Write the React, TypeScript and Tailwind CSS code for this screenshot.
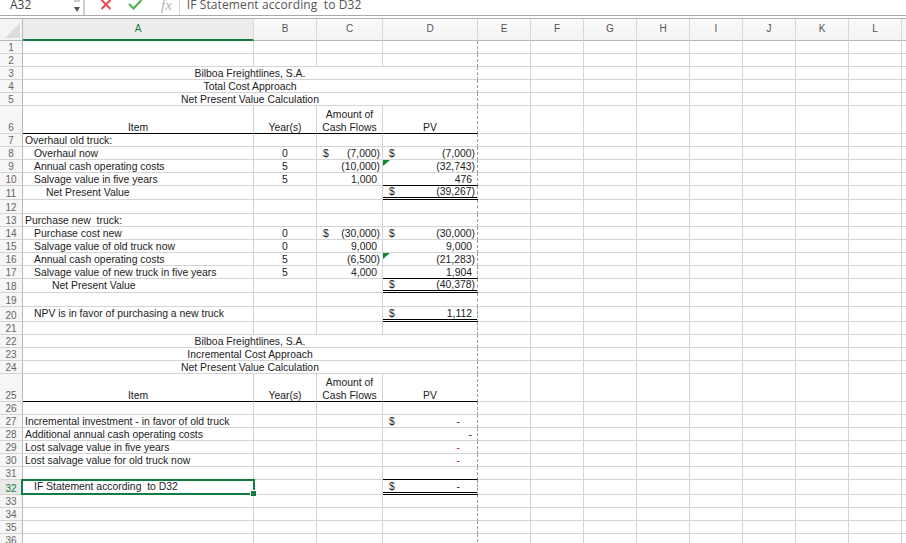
import type { ReactNode } from 'react';

type Row = {
  n: number;
  h: string;
  title?: string;
  item?: string;
  indent?: string;
  year?: string;
  cSign?: boolean;
  c?: string;
  cPad?: boolean;
  dSign?: boolean;
  d?: string;
  dPad?: boolean;
  dClass?: string;
  dBorder?: string;
  flag?: boolean;
  head?: boolean;
};

const L1 = 'pl-[2px]';
const L2 = 'pl-[11px]';
const single = 'border-b border-b-black';
const double = 'border-b-[3px] border-b-black [border-bottom-style:double]!';

const rows: Row[] = [
  { n: 1, h: 'h-[13px]' },
  { n: 2, h: 'h-[13px]' },
  { n: 3, h: 'h-[13px]', title: 'Bilboa Freightlines, S.A.' },
  { n: 4, h: 'h-[13px]', title: 'Total Cost Approach' },
  { n: 5, h: 'h-[13px]', title: 'Net Present Value Calculation' },
  { n: 6, h: 'h-[28px]', head: true },
  { n: 7, h: 'h-[13px]', item: 'Overhaul old truck:', indent: L1 },
  { n: 8, h: 'h-[13px]', item: 'Overhaul now', indent: L2, year: '0', cSign: true, c: '(7,000)', dSign: true, d: '(7,000)' },
  { n: 9, h: 'h-[13px]', item: 'Annual cash operating costs', indent: L2, year: '5', c: '(10,000)', d: '(32,743)', flag: true },
  { n: 10, h: 'h-[13px]', item: 'Salvage value in five years', indent: L2, year: '5', c: '1,000', cPad: true, d: '476', dPad: true, dBorder: single },
  { n: 11, h: 'h-[14px]', item: 'Net Present Value', indent: 'pl-[23px] pb-px', dSign: true, d: '(39,267)', dBorder: double },
  { n: 12, h: 'h-[14px]' },
  { n: 13, h: 'h-[13px]', item: 'Purchase new  truck:', indent: L1 },
  { n: 14, h: 'h-[13px]', item: 'Purchase cost new', indent: L2, year: '0', cSign: true, c: '(30,000)', dSign: true, d: '(30,000)' },
  { n: 15, h: 'h-[13px]', item: 'Salvage value of old truck now', indent: L2, year: '0', c: '9,000', cPad: true, d: '9,000', dPad: true },
  { n: 16, h: 'h-[13px]', item: 'Annual cash operating costs', indent: L2, year: '5', c: '(6,500)', d: '(21,283)', flag: true },
  { n: 17, h: 'h-[13px]', item: 'Salvage value of new truck in five years', indent: L2, year: '5', c: '4,000', cPad: true, d: '1,904', dPad: true, dBorder: single },
  { n: 18, h: 'h-[14px]', item: 'Net Present Value', indent: 'pl-[29px] pb-px', dSign: true, d: '(40,378)', dBorder: double },
  { n: 19, h: 'h-[14px]' },
  { n: 20, h: 'h-[15px]', item: 'NPV is in favor of purchasing a new truck', indent: 'pl-[11px] pb-[2px]', dSign: true, d: '1,112', dPad: true, dBorder: double },
  { n: 21, h: 'h-[13px]' },
  { n: 22, h: 'h-[13px]', title: 'Bilboa Freightlines, S.A.' },
  { n: 23, h: 'h-[13px]', title: 'Incremental Cost Approach' },
  { n: 24, h: 'h-[13px]', title: 'Net Present Value Calculation' },
  { n: 25, h: 'h-[28px]', head: true },
  { n: 26, h: 'h-[13px]' },
  { n: 27, h: 'h-[13px]', item: 'Incremental investment - in favor of old truck', indent: L1, dSign: true, d: '-', dClass: 'pr-[17px]' },
  { n: 28, h: 'h-[13px]', item: 'Additional annual cash operating costs', indent: L1, d: '-', dClass: 'pr-[5px]' },
  { n: 29, h: 'h-[13px]', item: 'Lost salvage value in five years', indent: L1, d: '-', dClass: 'pr-[17px] text-red-600' },
  { n: 30, h: 'h-[13px]', item: 'Lost salvage value for old truck now', indent: L1, d: '-', dClass: 'pr-[17px] text-red-600' },
  { n: 31, h: 'h-[13px]', dBorder: single },
  { n: 32, h: 'h-[15px]', item: 'IF Statement according  to D32', indent: 'pl-[11px] pb-[2px]', dSign: true, d: '-', dClass: 'pr-[17px]', dBorder: double },
  { n: 33, h: 'h-[13px]' },
  { n: 34, h: 'h-[13px]' },
  { n: 35, h: 'h-[13px]' },
  { n: 36, h: 'h-[13px]' },
];

const grid = 'border-r border-b border-[#d4d4d4]';
const dashed = 'border-r border-r-[#9a9a9a] [border-right-style:dashed]!';
const colA = 'w-[231px]';
const colB = 'w-[63px]';
const colC = 'w-[66px]';
const colD = 'w-[95px]';
const rest = ['E', 'F', 'G', 'H', 'I', 'J', 'K', 'L'];

function HeadCell({ w, active, children }: { w: string; active?: boolean; children?: ReactNode }) {
  return (
    <div
      className={`${w} flex shrink-0 items-center justify-center border-r border-[#d8d8d8] pb-px text-[10px] ${
        active ? 'border-b-2 border-b-[#107c41] bg-[#ececec] text-[#107c41]' : 'border-b border-b-[#b8b8b8] bg-gradient-to-b from-[#fbfbfb] to-[#f3f3f3] text-[#555]'
      }`}
    >
      {children}
    </div>
  );
}

function Money({ sign, value, pad, cls }: { sign?: boolean; value?: string; pad?: boolean; cls?: string }) {
  return (
    <>
      {sign && <span>$</span>}
      <span className={`ml-auto ${pad ? 'pr-[5px]' : 'pr-[2px]'} ${cls ?? ''}`}>{value}</span>
    </>
  );
}

function SheetRow({ r }: { r: Row }) {
  const sel = r.n === 32;
  const headLine = r.head ? 'border-b-black' : '';
  return (
    <div className={`${r.h} flex`}>
      <div
        className={`flex w-[23px] shrink-0 items-end justify-center border-r border-b border-r-[#b8b8b8] border-b-[#d4d4d4] text-[10px] ${
          sel ? 'bg-[#e9e9e9] text-[#107c41]' : 'bg-[#f6f6f6] text-[#666]'
        }`}
      >
        {r.n}
      </div>
      {r.title ? (
        <div className={`flex w-[455px] shrink-0 items-end justify-center border-b border-b-[#d4d4d4] ${dashed}`}>{r.title}</div>
      ) : (
        <>
          <div className={`${colA} relative flex shrink-0 items-end whitespace-pre ${r.head ? 'justify-center' : 'justify-start'} ${r.indent ?? ''} ${grid} ${headLine}`}>
            {r.head ? 'Item' : r.item}
            {sel && (
              <div className="absolute top-[-1px] left-[-2px] z-10 h-[16px] w-[234px] border-2 border-[#107c41]">
                <div className="absolute right-[-3px] bottom-[-3px] h-[5px] w-[5px] bg-[#107c41] ring-1 ring-white" />
              </div>
            )}
          </div>
          <div className={`${colB} flex shrink-0 items-end justify-center ${grid} ${headLine}`}>{r.head ? 'Year(s)' : r.year}</div>
          <div className={`${colC} flex shrink-0 items-end ${r.head ? 'justify-center text-center' : 'pl-[6px]'} ${grid} ${headLine}`}>
            {r.head ? <span className="mb-[-1px] leading-[13px]">Amount of<br />Cash Flows</span> : <Money sign={r.cSign} value={r.c} pad={r.cPad} />}
          </div>
          <div className={`${colD} relative flex shrink-0 items-end ${r.head ? 'justify-center border-b border-b-black' : `pl-[6px] border-b border-b-[#d4d4d4] ${r.dBorder ?? ''}`} ${dashed}`}>
            {r.head ? 'PV' : <Money sign={r.dSign} value={r.d} pad={r.dPad} cls={r.dClass} />}
            {r.flag && (
              <svg className="absolute top-0 left-0" width="7" height="7" viewBox="0 0 7 7">
                <path d="M0 0H7L0 6Z" fill="#0f8a2c" />
              </svg>
            )}
          </div>
        </>
      )}
      {rest.map((c) => (
        <div key={c} className={`w-[53px] shrink-0 ${grid}`} />
      ))}
      <div className="flex-1 border-b border-[#d4d4d4]" />
    </div>
  );
}

export default function App() {
  return (
    <div className="h-[543px] w-[906px] overflow-hidden bg-white font-['Liberation_Sans',Arial,sans-serif] text-[10.4px] leading-[10px] text-[#222]">
      <div className="flex h-[16px] items-start overflow-hidden border-b border-[#a9a9a9] font-['Open_Sans',sans-serif] text-[12px] text-[#444]">
        <div className="relative flex h-full w-[85px] shrink-0 items-start border-r-2 border-[#d0d0d0] pl-[10px]">
          <span className="mt-[-3px] leading-[16px]">A32</span>
          <svg className="absolute top-0 left-[73px]" width="8" height="13" viewBox="0 0 8 13">
            <path d="M1 1H7" stroke="#999" />
            <path d="M1 7H7L4 12Z" fill="#555" />
          </svg>
        </div>
        <svg className="mt-0 ml-[15px] shrink-0" width="12" height="10" viewBox="0 0 12 10">
          <path d="M1.5 0L10.5 9M10.5 0L1.5 9" stroke="#e5484d" strokeWidth="2" fill="none" />
        </svg>
        <svg className="ml-[16px] shrink-0" width="15" height="10" viewBox="0 0 15 10">
          <path d="M1 4L5.5 8.5L13.5 0" stroke="#4caf50" strokeWidth="2" fill="none" />
        </svg>
        <span className="mt-[-3px] ml-[18px] font-['Liberation_Serif',serif] text-[15px] leading-[16px] text-[#b5b5b5] italic">fx</span>
        <div className="ml-[7px] h-full w-px bg-[#d8d8d8]" />
        <span className="mt-[-3px] ml-[7px] whitespace-pre leading-[16px] tracking-[0.1px] text-[#555]">IF Statement according  to D32</span>
      </div>
      <div className="h-[3px] border-b border-[#b0b0b0] bg-white" />
      <div className="flex h-[22px]">
        <div className="flex w-[23px] shrink-0 items-end justify-end border-r border-b border-[#b8b8b8] bg-[#f4f4f4] p-[2px]">
          <svg width="15" height="15" viewBox="0 0 15 15">
            <path d="M15 0V15H0Z" fill="#dcdcdc" />
          </svg>
        </div>
        <HeadCell w={colA} active>A</HeadCell>
        <HeadCell w={colB}>B</HeadCell>
        <HeadCell w={colC}>C</HeadCell>
        <HeadCell w={colD}>D</HeadCell>
        {rest.map((c) => (
          <HeadCell key={c} w="w-[53px]">{c}</HeadCell>
        ))}
        <div className="flex-1 border-b border-[#b8b8b8] bg-[#f6f6f6]" />
      </div>
      {rows.map((r) => (
        <SheetRow key={r.n} r={r} />
      ))}
    </div>
  );
}
